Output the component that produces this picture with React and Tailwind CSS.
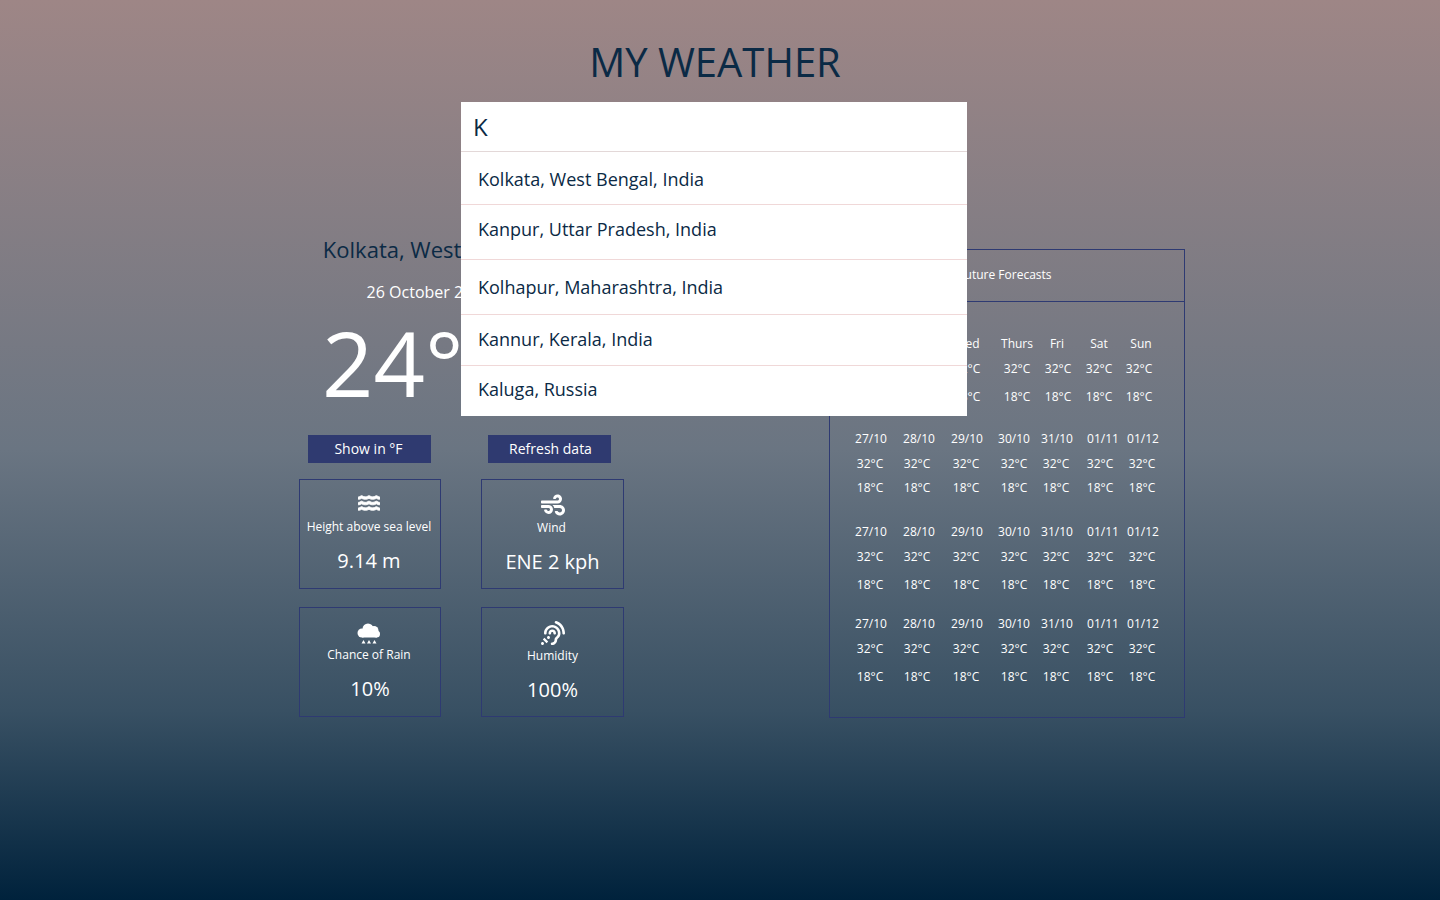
import { FaWater, FaWind, FaAssistiveListeningSystems } from "react-icons/fa";

const days = ["Mon", "Tue", "Wed", "Thurs", "Fri", "Sat", "Sun"];
const dates = ["27/10", "28/10", "29/10", "30/10", "31/10", "01/11", "01/12"];
const suggestions = [
  { name: "Kolkata, West Bengal, India", cls: "h-[53px] pt-[13px]" },
  { name: "Kanpur, Uttar Pradesh, India", cls: "h-[55px] pt-[10px]" },
  { name: "Kolhapur, Maharashtra, India", cls: "h-[55px] pt-[13px]" },
  { name: "Kannur, Kerala, India", cls: "h-[51px] pt-[10px]" },
  { name: "Kaluga, Russia", cls: "h-[50px] pt-[9px]" },
];

const RainIcon = () => (
  <svg width="24" height="22" viewBox="0 0 24 22" fill="#fff">
    <circle cx="5" cy="10" r="4.5" />
    <circle cx="11" cy="6" r="5.5" />
    <circle cx="17" cy="7.5" r="4.5" />
    <circle cx="19.5" cy="11" r="3.5" />
    <rect x="5" y="9" width="15" height="5.5" />
    <path d="M6.5 17l2 3.5h-4zM12 17l2 3.5h-4zM17.5 17l2 3.5h-4z" />
  </svg>
);

const Row = ({ items, grid, cls }) => (
  <div className={`grid ${grid} ${cls}`}>
    {items.map((t, i) => (
      <span key={i} className="flex justify-center whitespace-nowrap">{t}</span>
    ))}
  </div>
);

const Card = ({ icon, label, value, cls, iconCls, labelCls, valueCls }) => (
  <div className={`flex h-[110px] w-full flex-col items-center border border-[#2e3a72] ${cls}`}>
    <div className={`flex h-[24px] items-center ${iconCls}`}>{icon}</div>
    <div className={`text-xs leading-[16px] ${labelCls}`}>{label}</div>
    <div className={`text-[20px] leading-[28px] ${valueCls}`}>{value}</div>
  </div>
);

const colsDays = "grid-cols-[48px_48px_48px_52px_28px_56px_28px]";
const colsTop = "grid-cols-[48px_48px_48px_52px_30px_52px_28px]";
const colsDate = "grid-cols-[48px_48px_48px_46px_40px_52px_28px]";
const colsTemp = "grid-cols-[46px_48px_50px_46px_38px_50px_34px]";

const Block = ({ cls, third }) => (
  <div className={cls}>
    <Row items={dates} grid={colsDate} cls="h-[17px] leading-[17px]" />
    <Row items={Array(7).fill("32°C")} grid={colsTemp} cls="mt-[8px] h-[17px] leading-[17px]" />
    <Row items={Array(7).fill("18°C")} grid={colsTemp} cls={`${third} h-[17px] leading-[17px]`} />
  </div>
);

export default function App() {
  return (
    <div className="flex min-h-[900px] w-full flex-col bg-[linear-gradient(to_bottom,#9e8686_0%,#6a7582_50%,#385063_79%,#00223c_100%)] font-['Open_Sans',sans-serif] text-white">
      <h1 className="mt-[35px] mr-[10px] h-[54px] text-center text-[40px] leading-[54px] text-[#0b2a45]">MY WEATHER</h1>

      <div className="relative z-10 ml-[461px] mt-[13px] w-[506px]">
        <div className="h-[50px] border-b border-[#e3d8d8] bg-white pl-[12px] text-2xl leading-[50px] text-[#0b2a45]">K</div>
        <ul className="absolute left-0 top-full w-full bg-white text-[18px] leading-[28px] text-[#0b2a45]">
          {suggestions.map((s, i) => (
            <li key={s.name} className={`${s.cls} pl-[17px] ${i < 4 ? "border-b border-[#f0d8d8]" : ""}`}>{s.name}</li>
          ))}
        </ul>
      </div>

      <div className="ml-[298px] mt-[82px] flex items-start">
        <div className="flex w-[326px] flex-col items-center">
          <div className="text-[22px] leading-[30px] text-[#0b2a45]">Kolkata, West Bengal, India</div>
          <div className="mt-[17px] pl-[4px] text-base leading-[22px]">26 October 2020, Monday</div>
          <div className="h-[132px] w-full pl-[24px] text-[90px] leading-[119px]">24°C</div>
          <div className="flex w-full pl-[10px]">
            <button className="h-[28px] w-[123px] bg-[#2f3a70] pr-[2px] text-sm">Show in °F</button>
            <button className="ml-[57px] h-[28px] w-[123px] bg-[#2f3a70] pl-[2px] text-sm">Refresh data</button>
          </div>
          <div className="mt-[16px] grid w-full grid-cols-[142px_143px] justify-between gap-y-[18px] pl-[1px]">
            <Card cls="pr-[2px]" icon={<FaWater size={22} stroke="currentColor" strokeWidth={24} />} iconCls="mt-[11px]" label="Height above sea level" labelCls="mt-[4px]" value="9.14 m" valueCls="mt-[12px]" />
            <Card icon={<FaWind size={24} />} iconCls="mt-[13px]" label="Wind" labelCls="mt-[3px] pr-[2px]" value="ENE 2 kph" valueCls="mt-[12px]" />
            <Card cls="pr-[2px]" icon={<RainIcon />} iconCls="mt-[14px]" label="Chance of Rain" labelCls="mt-[1px]" value="10%" valueCls="mt-[12px] pl-[2px]" />
            <Card icon={<FaAssistiveListeningSystems size={24} />} iconCls="mt-[13px]" label="Humidity" labelCls="mt-[3px]" value="100%" valueCls="mt-[12px]" />
          </div>
        </div>

        <div className="ml-[205px] mt-[15px] h-[469px] w-[356px] border border-[#2e3a72] text-xs">
          <div className="h-[52px] border-b border-[#2e3a72] pr-[4px] text-center leading-[50px]">Future Forecasts</div>
          <div className="pl-[17px] pt-[33px]">
            <Row items={days} grid={colsDays} cls="h-[17px] leading-[17px]" />
            <Row items={Array(7).fill("32°C")} grid={colsTop} cls="mt-[8px] h-[17px] leading-[17px]" />
            <Row items={Array(7).fill("18°C")} grid={colsTop} cls="mt-[11px] h-[17px] leading-[17px]" />
            <Block cls="mt-[25px]" third="mt-[7px]" />
            <Block cls="mt-[27px]" third="mt-[11px]" />
            <Block cls="mt-[22px]" third="mt-[11px]" />
          </div>
        </div>
      </div>
    </div>
  );
}
